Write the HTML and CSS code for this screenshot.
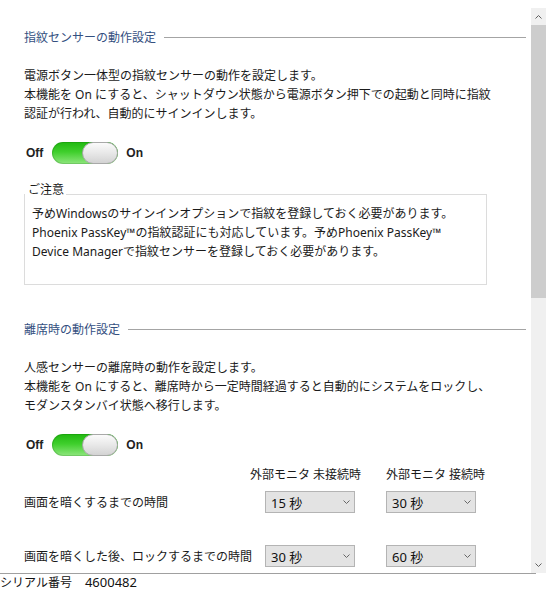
FILE: index.html
```html
<!DOCTYPE html>
<html lang="ja">
<head>
<meta charset="utf-8">
<title>設定</title>
<link rel="stylesheet" href="styles.css">
</head>
<body>
<div class="panel">
  <div class="content">
    <div class="section-title"><span>指紋センサーの動作設定</span><span class="rule"></span></div>
    <p class="desc">電源ボタン一体型の指紋センサーの動作を設定します。<br>本機能を On にすると、シャットダウン状態から電源ボタン押下での起動と同時に指紋<br>認証が行われ、自動的にサインインします。</p>
    <div class="toggle-row">
      <span>Off</span>
      <span class="switch"><span class="knob"></span></span>
      <span>On</span>
    </div>
    <fieldset class="note">
      <legend>ご注意</legend>
      <div class="note-body">予めWindowsのサインインオプションで指紋を登録しておく必要があります。<br>Phoenix PassKey™の指紋認証にも対応しています。予めPhoenix PassKey™<br>Device Managerで指紋センサーを登録しておく必要があります。</div>
    </fieldset>

    <div class="section-title second"><span>離席時の動作設定</span><span class="rule"></span></div>
    <p class="desc">人感センサーの離席時の動作を設定します。<br>本機能を On にすると、離席時から一定時間経過すると自動的にシステムをロックし、<br>モダンスタンバイ状態へ移行します。</p>
    <div class="toggle-row">
      <span>Off</span>
      <span class="switch"><span class="knob"></span></span>
      <span>On</span>
    </div>
    <div class="cols-head"><span class="col-a">外部モニタ 未接続時</span><span>外部モニタ 接続時</span></div>
    <div class="row first">
      <span class="label">画面を暗くするまでの時間</span>
      <div class="select"><span>15 秒</span><svg class="chev" width="7" height="4" viewBox="0 0 7 4"><polyline points="0.5,0.5 3.5,3.5 6.5,0.5" fill="none" stroke="#666" stroke-width="1"/></svg></div>
      <div class="select"><span>30 秒</span><svg class="chev" width="7" height="4" viewBox="0 0 7 4"><polyline points="0.5,0.5 3.5,3.5 6.5,0.5" fill="none" stroke="#666" stroke-width="1"/></svg></div>
    </div>
    <div class="row second-row">
      <span class="label">画面を暗くした後、ロックするまでの時間</span>
      <div class="select"><span>30 秒</span><svg class="chev" width="7" height="4" viewBox="0 0 7 4"><polyline points="0.5,0.5 3.5,3.5 6.5,0.5" fill="none" stroke="#666" stroke-width="1"/></svg></div>
      <div class="select"><span>60 秒</span><svg class="chev" width="7" height="4" viewBox="0 0 7 4"><polyline points="0.5,0.5 3.5,3.5 6.5,0.5" fill="none" stroke="#666" stroke-width="1"/></svg></div>
    </div>
  </div>
  <div class="scrollbar">
    <div class="sb-btn"><svg width="7" height="4" viewBox="0 0 7 4"><polyline points="0.5,3.5 3.5,0.5 6.5,3.5" fill="none" stroke="#606060" stroke-width="1"/></svg></div>
    <div class="sb-thumb"></div>
    <div class="sb-track"></div>
    <div class="sb-btn"><svg width="7" height="4" viewBox="0 0 7 4"><polyline points="0.5,0.5 3.5,3.5 6.5,0.5" fill="none" stroke="#606060" stroke-width="1"/></svg></div>
  </div>
</div>
<div class="footer"><span class="f-label">シリアル番号</span><span class="f-num">4600482</span></div>
</body>
</html>
```

FILE: styles.css
```css
html, body {
  margin: 0;
  padding: 0;
  background: #ffffff;
}
body {
  font-family: "Noto Sans", "Noto Sans CJK JP", sans-serif;
  font-size: 12px;
  color: #1a1a1a;
  width: 546px;
  height: 591px;
  overflow: hidden;
}
.panel {
  display: flex;
  height: 573px;
}
.content {
  flex: 1;
  min-width: 0;
  padding: 28px 5px 0 24px;
  overflow: hidden;
}
.section-title {
  display: flex;
  align-items: center;
  gap: 8px;
  color: #34507f;
  line-height: 19px;
  height: 19px;
}
.section-title.second {
  margin-top: 35px;
}
.rule {
  flex: 1;
  height: 1px;
  background: #a4a4a4;
}
.desc {
  margin: 19px 0 0;
  line-height: 19px;
  white-space: nowrap;
}
.toggle-row {
  display: flex;
  align-items: center;
  gap: 8px;
  margin: 19px 0 0 2px;
  height: 22px;
  font-family: "Liberation Sans", Arial, sans-serif;
  font-weight: bold;
  font-size: 12px;
  color: #222;
}
.switch {
  position: relative;
  display: block;
  width: 66px;
  height: 22px;
  margin-left: 1px;
  border-radius: 11px;
  background: linear-gradient(to bottom, #20b810 0%, #3fcf2c 45%, #8fe67e 100%);
  box-shadow: inset 0 0 0 1px rgba(0, 80, 0, 0.18);
}
.knob {
  position: absolute;
  right: 0;
  top: 0;
  width: 36px;
  height: 22px;
  box-sizing: border-box;
  border-radius: 11px;
  border: 1px solid #a9a9a9;
  background: linear-gradient(to bottom, #fbfbfb 0%, #e8e8e8 50%, #d3d3d3 100%);
}
.note {
  margin: 20px 0 0;
  padding: 0 0 23px;
  width: 463px;
  box-sizing: border-box;
  border: 1px solid #dcdcdc;
  min-inline-size: auto;
}
.note legend {
  padding: 0 2px 8px 3px;
  margin: 0;
  line-height: 12px;
}
.note-body {
  padding-left: 7px;
  line-height: 19px;
  white-space: nowrap;
}
.cols-head {
  display: flex;
  margin-top: 9px;
  padding-left: 226px;
  line-height: 19px;
  white-space: nowrap;
}
.col-a {
  width: 136px;
}
.row {
  display: flex;
  align-items: center;
  height: 22px;
}
.row.first {
  margin-top: 7px;
}
.row.second-row {
  margin-top: 32px;
}
.label {
  width: 241px;
  white-space: nowrap;
}
.select {
  width: 90px;
  height: 22px;
  box-sizing: border-box;
  border: 1px solid #b4b4b4;
  background: #e3e3e3;
  display: flex;
  align-items: center;
  justify-content: space-between;
  padding: 0 4px 0 5px;
  font-size: 13px;
  color: #111;
}
.select + .select {
  margin-left: 31px;
}
.chev {
  display: block;
}
.scrollbar {
  width: 15px;
  margin-top: 8px;
  display: flex;
  flex-direction: column;
  background: #f0f0f0;
}
.sb-btn {
  height: 17px;
  display: flex;
  align-items: center;
  justify-content: center;
  background: #f0f0f0;
}
.sb-thumb {
  height: 273px;
  background: #cdcdcd;
}
.sb-track {
  flex: 1;
}
.footer {
  width: 536px;
  border-top: 1px solid #a0a0a0;
  line-height: 17px;
  height: 17px;
  display: flex;
  white-space: nowrap;
  color: #111;
}
.f-label {
  margin-right: 13px;
}
.f-num {
  font-size: 13px;
}
```
